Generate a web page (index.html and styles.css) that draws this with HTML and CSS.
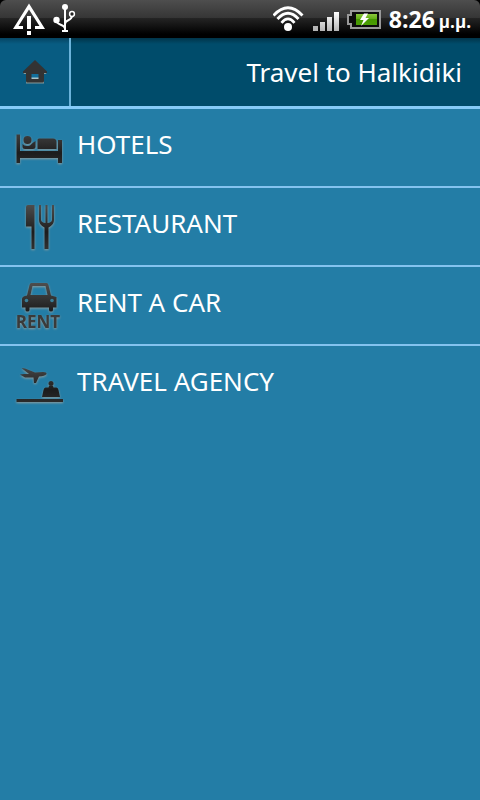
FILE: index.html
```
<!DOCTYPE html>
<html lang="en">
    <head>
        <meta charset="UTF-8">
        <meta name="viewport" content="width=device-width, initial-scale=1">
        <title>Travel to Halkidiki</title>
        <link rel="stylesheet" href="styles.css">
    </head>
    <body>
        <!-- shared gradient for the dark icons -->
        <svg class="defs" width="0" height="0" aria-hidden="true">
            <defs>
                <linearGradient id="dark" x1="0" y1="0" x2="0" y2="48" gradientUnits="userSpaceOnUse">
                    <stop offset="0" stop-color="#505050"/>
                    <stop offset="0.5" stop-color="#262626"/>
                    <stop offset="0.6" stop-color="#1c1c1c"/>
                    <stop offset="1" stop-color="#333333"/>
                </linearGradient>
            </defs>
        </svg>

        <div class="status-bar">
            <div class="status-shade">
                <div class="status-group notices">
                    <svg width="32" height="38" viewBox="0 0 32 38" aria-hidden="true">
                        <path d="M16 3.500L32 29H22V26H26.500L16 9.500L5.500 26H10V29H0Z" fill="#fff"/>
                        <path d="M14 16h4v13h-4zM14 31h4v4h-4z" fill="#fff"/>
                    </svg>
                    <svg width="24" height="38" viewBox="0 0 24 38" aria-hidden="true">
                        <path d="M12 6V31M3 20C3.500 26 12 23.500 12 29M19 15.500C19 21.500 12 19 12 24" fill="none" stroke="#fff" stroke-width="2"/>
                        <circle cx="12" cy="7" r="3" fill="#fff"/>
                        <circle cx="3.500" cy="20" r="3.200" fill="#fff"/>
                        <circle cx="19" cy="14" r="2.400" fill="#222" stroke="#fff" stroke-width="1.500"/>
                        <path d="M9 30h6v2h-6z" fill="#fff"/>
                    </svg>
                </div>
                <div class="status-group">
                    <svg width="32" height="38" viewBox="0 0 32 38" aria-hidden="true">
                        <circle cx="15" cy="27" r="4" fill="#fff"/>
                        <path d="M0.500 15.500Q15 0 29.500 15.500M4.500 19Q15 7.500 25.500 19M8.500 22.800Q15 15 21.500 22.800" fill="none" stroke="#fff" stroke-width="2.800"/>
                    </svg>
                    <svg width="26" height="38" viewBox="0 0 26 38" aria-hidden="true">
                        <linearGradient id="bars" x1="0" y1="0" x2="0" y2="1">
                            <stop offset="0" stop-color="#fff"/>
                            <stop offset="1" stop-color="#b5b5b5"/>
                        </linearGradient>
                        <path d="M0 26h5v5h-5z" fill="#b5b5b5"/>
                        <path d="M7 22h5v9h-5zM14 17h5v14h-5zM21 12h5v19h-5z" fill="url(#bars)"/>
                    </svg>
                    <svg width="34" height="38" viewBox="0 0 34 38" aria-hidden="true">
                        <linearGradient id="charge" x1="0" y1="0" x2="0" y2="1">
                            <stop offset="0" stop-color="#8cc83c"/>
                            <stop offset="0.45" stop-color="#62ad16"/>
                            <stop offset="0.5" stop-color="#459800"/>
                            <stop offset="1" stop-color="#4a9d04"/>
                        </linearGradient>
                        <path d="M4 11H33V28H4V24H1V15H4Z" fill="#0c0c0c" stroke="#999" stroke-width="2"/>
                        <path d="M9 14H30V25H9Z" fill="url(#charge)"/>
                        <path d="M17 13.500H21L18.500 18H22L14 26L16.500 20H13Z" fill="#fff"/>
                    </svg>
                    <div class="clock">8:26 <span class="meridiem">μ.μ.</span></div>
                </div>
            </div>
        </div>

        <header class="header">
            <button class="home-btn" type="button" aria-label="Home">
                <svg width="24" height="24" viewBox="0 0 24 24" aria-hidden="true">
                    <path d="M3 21H21V23.500H3ZM0 12H4V14H1ZM20 12H24L23 14H20Z" fill="#a9aaa0" opacity="0.8"/>
                    <path d="M12 0L24 11.500V13H21V21Q21 22.500 19.500 22.500H4.500Q3 22.500 3 21V13H0V11.500Z" fill="#333"/>
                    <path d="M8.500 14h7v4h-7z" fill="#126f9b"/>
                    <path d="M8.500 17.500h7v1.500h-7z" fill="#a9c4c8"/>
                </svg>
            </button>
            <h1 class="title">Travel to Halkidiki</h1>
        </header>

        <nav class="menu">
            <a class="menu-item" href="#hotels">
                <svg class="icon" width="48" height="48" viewBox="0 0 48 48" aria-hidden="true">
                    <g fill="url(#dark)">
                        <path d="M1.500 10.500H5V27H43V16H47V39H43V34H5V39H1.500Z"/>
                        <circle cx="12.500" cy="16" r="4"/>
                        <path d="M7.500 20Q10 23 15 21.500Q18 18 20.500 17V23Q20.500 25 18 25H10Q7.500 25 7.500 23Z"/>
                        <path d="M24 14.500H38Q41.500 14.500 41.500 18V25H22.500V16Q22.500 14.500 24 14.500Z"/>
                    </g>
                </svg>
                <span class="label">HOTELS</span>
            </a>
            <a class="menu-item" href="#restaurant">
                <svg class="icon" width="48" height="48" viewBox="0 0 48 48" aria-hidden="true">
                    <path d="M13 2H19.500V46H16.500V23.500H11V4Q11 2 13 2Z" fill="url(#dark)"/>
                    <path d="M24 2H26V17Q26.500 19.500 30.500 20V2H32.500V20Q36.500 19.500 37 17V2H39V17Q39 22 33.500 24.500V46H29.500V24.500Q24 22 24 17Z" fill="url(#dark)"/>
                </svg>
                <span class="label">RESTAURANT</span>
            </a>
            <a class="menu-item" href="#rent-a-car">
                <svg class="icon" width="48" height="48" viewBox="0 0 48 48" aria-hidden="true">
                    <path d="M16.500 1H31.500Q33 1 33.500 3L36 13.500L41.500 15V25.500H38V28Q38 29.500 36 29.500Q34 29.500 34 28V25.500H14.500V28Q14.500 29.500 12.500 29.500Q10.500 29.500 10.500 28V25.500H7V17Q7 14 12 13.500L14.500 3Q15 1 16.500 1ZM17.500 4L15.500 13H32.500L30.500 4Z" fill="url(#dark)" fill-rule="evenodd"/>
                    <circle cx="11.500" cy="18.500" r="1.800" fill="#3a7f98"/>
                    <circle cx="37" cy="18.500" r="1.800" fill="#3a7f98"/>
                    <text class="icon-text" x="23" y="46" text-anchor="middle">RENT</text>
                </svg>
                <span class="label">RENT A CAR</span>
            </a>
            <a class="menu-item" href="#travel-agency">
                <svg class="icon" width="48" height="48" viewBox="0 0 48 48" aria-hidden="true">
                    <g fill="url(#dark)">
                        <path d="M6.500 7L10 7.500L20 11.500L28 11Q32 11 31.500 13Q30 15 24 15.500L21 22H19L18.500 16.500L10 16.500L5 13.500L9 13L14 13Z"/>
                        <circle cx="36" cy="22.500" r="2.500"/>
                        <path d="M34 25H38L38.500 26.500H41.500Q43 26.500 43.500 29L45 36H27L28.500 29Q29 26.500 30.500 26.500H33.500Z"/>
                        <path d="M1.500 38H48V41H1.500Z"/>
                    </g>
                </svg>
                <span class="label">TRAVEL AGENCY</span>
            </a>
        </nav>
    </body>
</html>
```
FILE: styles.css
```
* {
    box-sizing: border-box;
}
body {
    margin: 0;
    min-height: 100vh;
    background-color: #237da6;
    color: white;
    font-family: "Noto Sans", "Open Sans", sans-serif;
}
svg {
    display: block;
    flex: none;
}
.defs {
    position: absolute;
}

/* Phone status bar */
.status-bar {
    background-color: black;
}
.status-shade {
    display: flex;
    justify-content: space-between;
    height: 38px;
    padding: 0 9px 0 13px;
    border-radius: 6px 6px 0 0;
    background: linear-gradient(#4e4e4e, #363636 46%, #242424 48%, #000 90%);
}
.status-group {
    display: flex;
    gap: 8px;
}
.clock {
    font-family: "Open Sans", sans-serif;
    font-size: 23px;
    font-weight: bold;
    line-height: 38px;
    white-space: nowrap;
}
.meridiem {
    margin-left: -2px;
    font-size: 17px;
}

/* Title bar */
.header {
    display: flex;
    align-items: stretch;
    height: 71px;
    border-bottom: 3px solid #85cbf8;
    background: linear-gradient(#013449, #004c6b 6px);
}
.home-btn {
    display: flex;
    align-items: center;
    justify-content: center;
    width: 71px;
    padding: 0;
    border: none;
    border-right: 2px solid #6bb3da;
    background: linear-gradient(#054462, #085c82 6px);
    cursor: pointer;
}
.title {
    flex: 1;
    margin: 0;
    padding-right: 18px;
    font-size: 26px;
    font-weight: normal;
    line-height: 68px;
    text-align: right;
}

/* Menu rows */
.menu {
    display: flex;
    flex-direction: column;
}
.menu-item {
    display: flex;
    align-items: flex-start;
    gap: 12px;
    height: 79px;
    padding: 15px 15px 0;
    border-bottom: 2px solid #83c3ef;
    color: white;
    text-decoration: none;
}
.menu-item:last-child {
    border-bottom: none;
}
.icon {
    overflow: visible;
    filter: drop-shadow(0 1px 1px #8f9e9f);
}
.icon-text {
    font-family: "Open Sans", sans-serif;
    font-size: 17px;
    font-weight: bold;
    fill: #3a3a3a;
}
.label {
    padding-left: 2px;
    font-size: 26px;
    line-height: 40px;
}
```
